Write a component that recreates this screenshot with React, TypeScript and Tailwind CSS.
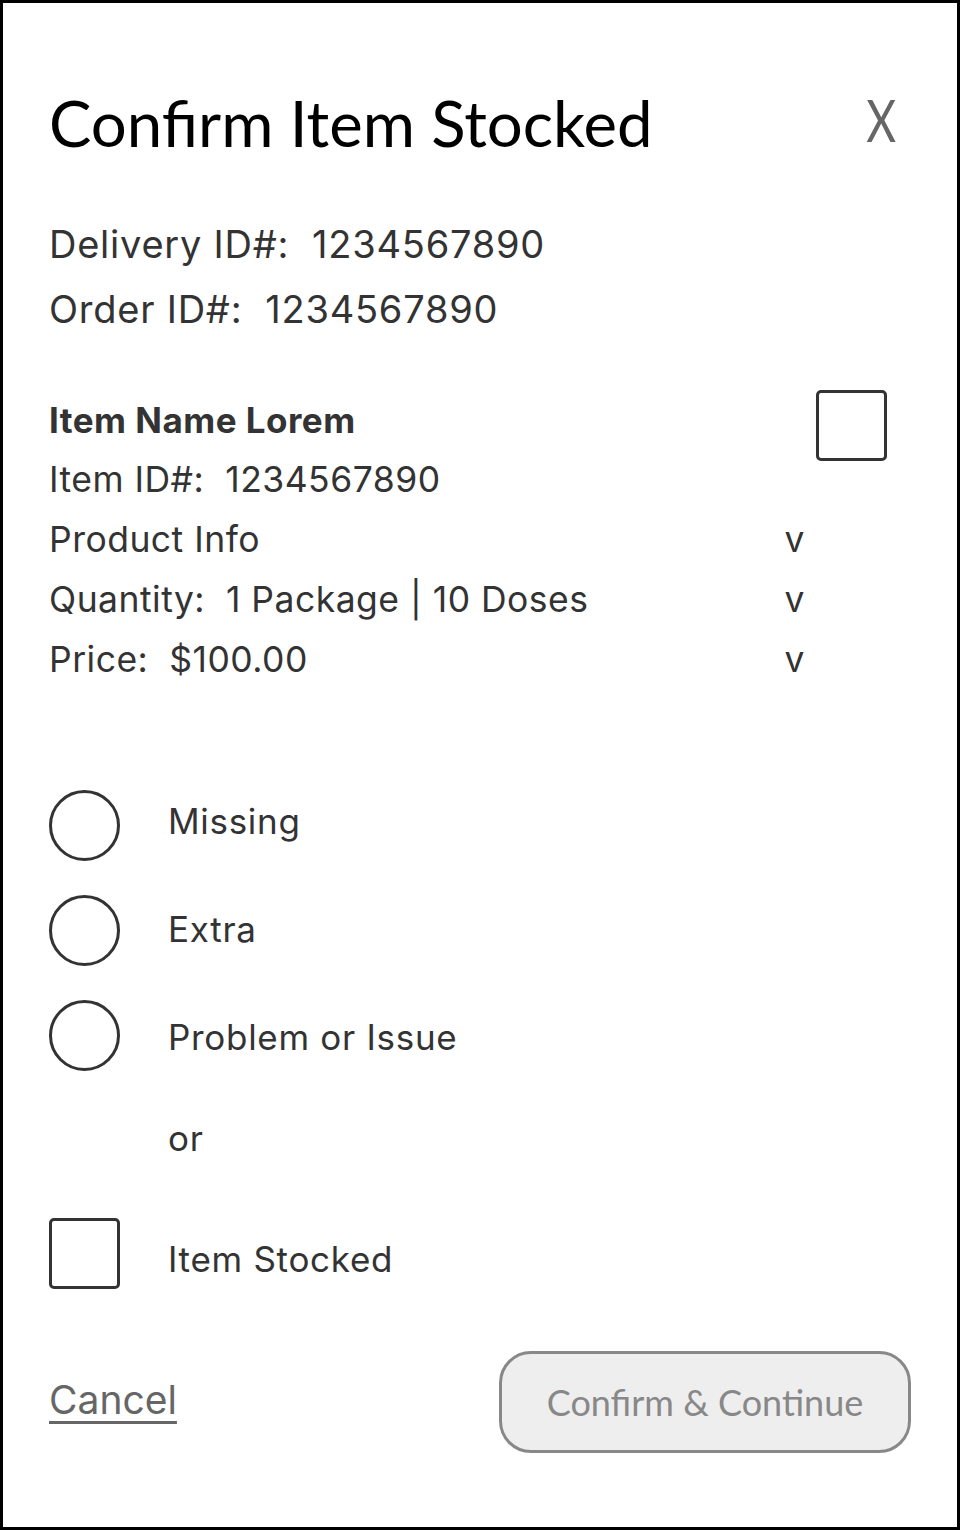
import React from "react";

// fonts by name, nothing to load
const lato = "font-['Lato',sans-serif]";
const inter = "font-['Inter',sans-serif]";

function Chevron() {
    return <span className="leading-[60px]">v</span>;
}

// text sits a little lower on each row than the control beside it
function Option({ label, round, shift }: { label: string; round?: boolean; shift: string }) {
    return (
        <div className="flex items-start gap-[48px]">
            <span
                className={`block w-[71px] h-[71px] shrink-0 border-[3px] border-[#333] ${
                    round ? "rounded-full" : "rounded-[5px]"
                }`}
            />
            <span className={`text-[35px] tracking-[0.02em] leading-[59px] text-[#333] ${shift}`}>{label}</span>
        </div>
    );
}

export default function App() {
    return (
        <div className="w-[960px] h-[1530px] bg-white border-[3px] border-black flex flex-col px-[46px]">
            {/* header */}
            <div className="flex justify-between items-start pt-[81px]">
                <h1 className={`${lato} text-[63.5px] leading-[77px] text-black`}>Confirm Item Stocked</h1>
                <button className={`${lato} text-[59px] leading-[72px] text-[#666] mr-[11px] scale-x-[0.78]`}>X</button>
            </div>

            {/* ids */}
            <div className={`${inter} text-[38px] tracking-[0.02em] leading-[65px] text-[#333] mt-[51px]`}>
                <p>Delivery ID#:&nbsp; 1234567890</p>
                <p>Order ID#:&nbsp; 1234567890</p>
            </div>

            {/* item block */}
            <div className={`${inter} flex mt-[48px] text-[#333] tracking-[0.03em]`}>
                <div className="flex-1 pr-[11px] text-[35.5px] leading-[60px]">
                    <p className="text-[35px] font-bold">Item Name Lorem</p>
                    <p>Item ID#:&nbsp; 1234567890</p>
                    <div className="flex justify-between">
                        <span>Product Info</span>
                        <Chevron />
                    </div>
                    <div className="flex justify-between">
                        <span>Quantity:&nbsp; 1 Package | 10 Doses</span>
                        <Chevron />
                    </div>
                    <div className="flex justify-between">
                        <span>Price:&nbsp; $100.00</span>
                        <Chevron />
                    </div>
                </div>
                <span className="block w-[71px] h-[71px] shrink-0 border-[3px] border-[#333] rounded-[5px] mr-[24px]" />
            </div>

            {/* status choices */}
            <div className={`${inter} flex flex-col mt-[100px]`}>
                <div className="flex flex-col gap-[34px]">
                    <Option label="Missing" round shift="pt-[2px]" />
                    <Option label="Extra" round shift="pt-[5px]" />
                    <Option label="Problem or Issue" round shift="pt-[8px]" />
                </div>
                <p className="text-[35px] tracking-[0.02em] leading-[59px] text-[#333] pl-[119px] mt-[38px]">or</p>
                <div className="mt-[50px]">
                    <Option label="Item Stocked" shift="pt-[12px]" />
                </div>
            </div>

            {/* actions */}
            <div className="flex justify-between items-center mt-[62px]">
                <a className={`${inter} text-[39px] leading-[48px] text-[#666] underline decoration-[3px] underline-offset-[7px] mb-[4px]`}>Cancel</a>
                <button className={`${lato} w-[412px] h-[102px] rounded-[32px] border-[3px] border-[#888] bg-[#eee] text-[36px] text-[#888]`}>
                    Confirm &amp; Continue
                </button>
            </div>
        </div>
    );
}
